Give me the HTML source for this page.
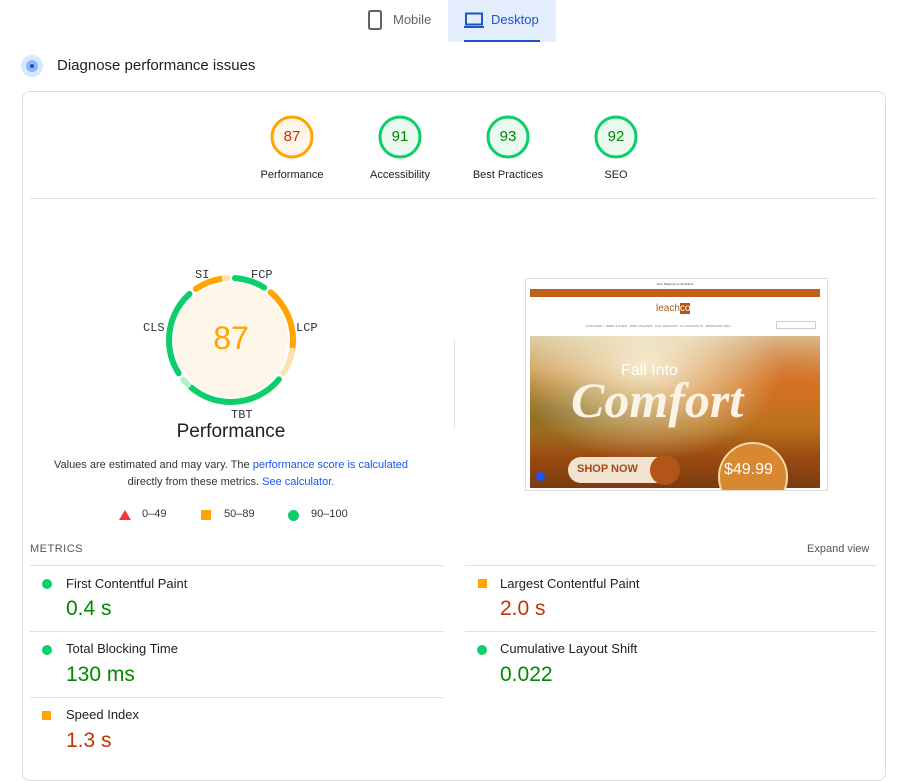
<!DOCTYPE html>
<html><head><meta charset="utf-8"><style>
*{margin:0;padding:0;box-sizing:border-box}
body{width:899px;height:766px;background:#fff;font-family:"Liberation Sans",Arial,sans-serif;color:#202124;position:relative;overflow:hidden}
.a{position:absolute}
.lbl{font-size:11px;color:#212121;text-align:center;width:110px}
.g{font-family:"Liberation Mono",monospace;font-size:12px;color:#333}
.mt{font-size:13px;color:#212121}
.mv{font-size:21px}
.line{position:absolute;height:1px;background:#e0e0e0}
</style></head><body>
<!-- tabs -->
<div class="a" style="left:448px;top:0;width:108px;height:42px;background:#e3edfb"></div>
<div class="a" style="left:464px;top:40px;width:76px;height:2px;background:#1a56c5"></div>
<svg class="a" style="left:367px;top:10px" width="16" height="20" viewBox="0 0 16 20"><rect x="2" y="1" width="12" height="18" rx="1.5" fill="none" stroke="#5f6368" stroke-width="2"/></svg>
<div class="a" style="left:393px;top:12px;font-size:13px;color:#5f6368">Mobile</div>
<svg class="a" style="left:464px;top:12px" width="20" height="17" viewBox="0 0 20 17"><rect x="2" y="1.5" width="16" height="11" fill="none" stroke="#1a56c5" stroke-width="2"/><rect x="0" y="14" width="20" height="2" fill="#1a56c5"/></svg>
<div class="a" style="left:491px;top:12px;font-size:13px;color:#1a56c5">Desktop</div>
<!-- diagnose -->
<div class="a" style="left:21px;top:55px;width:22px;height:22px;border-radius:50%;background:#d8e8fd"></div>
<div class="a" style="left:26px;top:60px;width:12px;height:12px;border-radius:50%;background:#8bb8f8"></div>
<div class="a" style="left:30px;top:64px;width:4px;height:4px;border-radius:50%;background:#1a56c5"></div>
<div class="a" style="left:57px;top:57px;font-size:15px;color:#202124">Diagnose performance issues</div>
<!-- card -->
<div class="a" style="left:22px;top:91px;width:864px;height:690px;border:1px solid #dadce0;border-radius:8px"></div>
<!-- small gauges -->
<svg class="a" style="left:268px;top:113px" width="48" height="48" viewBox="0 0 48 48"><circle cx="24" cy="24" r="20" fill="#fff6ea" stroke="#ffa400" stroke-width="3"/></svg>
<div class="a" style="left:268px;top:128px;width:48px;text-align:center;font-size:15px;color:#c33300">87</div>
<div class="a lbl" style="left:237px;top:169px">Performance</div>
<svg class="a" style="left:376px;top:113px" width="48" height="48" viewBox="0 0 48 48"><circle cx="24" cy="24" r="20" fill="#eafaf0" stroke="#0cce6b" stroke-width="3"/></svg>
<div class="a" style="left:376px;top:128px;width:48px;text-align:center;font-size:15px;color:#080">91</div>
<div class="a lbl" style="left:345px;top:169px">Accessibility</div>
<svg class="a" style="left:484px;top:113px" width="48" height="48" viewBox="0 0 48 48"><circle cx="24" cy="24" r="20" fill="#eafaf0" stroke="#0cce6b" stroke-width="3"/></svg>
<div class="a" style="left:484px;top:128px;width:48px;text-align:center;font-size:15px;color:#080">93</div>
<div class="a lbl" style="left:453px;top:169px">Best Practices</div>
<svg class="a" style="left:592px;top:113px" width="48" height="48" viewBox="0 0 48 48"><circle cx="24" cy="24" r="20" fill="#eafaf0" stroke="#0cce6b" stroke-width="3"/></svg>
<div class="a" style="left:592px;top:128px;width:48px;text-align:center;font-size:15px;color:#080">92</div>
<div class="a lbl" style="left:561px;top:169px">SEO</div>
<div class="line" style="left:30px;top:198px;width:847px"></div>
<!-- big gauge -->
<svg class="a" style="left:161px;top:270px" width="140" height="140" viewBox="161 270 140 140">
<circle cx="231" cy="340" r="57" fill="#fff6ea"/>
<g transform="rotate(-90 231 340)" fill="none" stroke-width="6" stroke-linecap="round">
<circle cx="231" cy="340" r="62" stroke="#0cce6b" stroke-dasharray="31 400" stroke-dashoffset="-4"/>
<circle cx="231" cy="340" r="62" stroke="#ffa400" stroke-dasharray="62 400" stroke-dashoffset="-43"/>
<circle cx="231" cy="340" r="62" stroke="#ffe0b3" stroke-dasharray="24 400" stroke-dashoffset="-108"/>
<circle cx="231" cy="340" r="62" stroke="#0cce6b" stroke-dasharray="98 400" stroke-dashoffset="-140"/>
<circle cx="231" cy="340" r="62" stroke="#b3f0d0" stroke-dasharray="7 400" stroke-dashoffset="-242"/>
<circle cx="231" cy="340" r="62" stroke="#0cce6b" stroke-dasharray="87 400" stroke-dashoffset="-257"/>
<circle cx="231" cy="340" r="62" stroke="#ffa400" stroke-dasharray="27 400" stroke-dashoffset="-352"/>
<circle cx="231" cy="340" r="62" stroke="#ffe0b3" stroke-dasharray="3 400" stroke-dashoffset="-383"/>
</g></svg>
<div class="a" style="left:181px;top:320px;width:100px;text-align:center;font-size:32px;color:#ffa400">87</div>
<div class="a g" style="left:195px;top:268px">SI</div>
<div class="a g" style="left:251px;top:268px">FCP</div>
<div class="a g" style="left:296px;top:321px">LCP</div>
<div class="a g" style="left:143px;top:321px">CLS</div>
<div class="a g" style="left:231px;top:408px">TBT</div>
<div class="a" style="left:131px;top:421px;width:200px;text-align:center;font-size:19px;color:#202124">Performance</div>
<div class="a" style="left:30px;top:457px;width:402px;text-align:center;font-size:11px;line-height:17px;color:#333">Values are estimated and may vary. The <span style="color:#1a56f5">performance score is calculated</span><br>directly from these metrics. <span style="color:#1a56f5">See calculator.</span></div>
<svg class="a" style="left:118px;top:509px" width="14" height="12"><polygon points="7,1 13,11 1,11" fill="#f33"/></svg>
<div class="a" style="left:142px;top:508px;font-size:11px;color:#333">0–49</div>
<div class="a" style="left:201px;top:510px;width:10px;height:10px;background:#ffa400"></div>
<div class="a" style="left:224px;top:508px;font-size:11px;color:#333">50–89</div>
<div class="a" style="left:288px;top:510px;width:11px;height:11px;border-radius:50%;background:#0cce6b"></div>
<div class="a" style="left:311px;top:508px;font-size:11px;color:#333">90–100</div>
<div class="a" style="left:454px;top:340px;width:1px;height:88px;background:#ddd"></div>
<!-- screenshot -->
<div class="a" style="left:525px;top:278px;width:303px;height:213px;border:1px solid #ddd;background:#fff;overflow:hidden">
 <div class="a" style="left:4px;top:3px;width:290px;text-align:center;font-size:3px;color:#333">Free Shipping on all Orders</div>
 <div class="a" style="left:4px;top:10px;width:290px;height:8px;background:#c0601a"></div>
 <div class="a" style="left:130px;top:24px;font-size:10px;color:#b05a1a">leach<span style="background:#b35418;color:#fff">co</span></div>
 <div class="a" style="left:60px;top:45px;font-size:3px;color:#777">OUR FAMILY · BABY &amp; CHILD · BODY PILLOWS · FALL SPECIALS · ALL PRODUCTS · IMPORTANT INFO</div>
 <div class="a" style="left:250px;top:42px;width:40px;height:8px;border:1px solid #ccc"></div>
 <div class="a" style="left:4px;top:57px;width:290px;height:152px;background:linear-gradient(180deg,#d9c9a0 0%,#c8872e 35%,#b4731e 60%,#9a4a10 80%,#7a3a10 100%)"></div>
 <div class="a" style="left:4px;top:57px;width:290px;height:152px;background:radial-gradient(ellipse at 40% 20%,rgba(255,250,230,.8),rgba(255,250,230,0) 55%),radial-gradient(ellipse at 90% 30%,rgba(220,90,20,.6),rgba(0,0,0,0) 40%),radial-gradient(ellipse at 10% 50%,rgba(90,100,40,.5),rgba(0,0,0,0) 40%)"></div>
 <div class="a" style="left:95px;top:83px;font-size:16px;color:#fff">Fall Into</div>
 <div class="a" style="left:45px;top:92px;font-size:50px;font-style:italic;font-weight:bold;font-family:'Liberation Serif',serif;color:#fbf3e6">Comfort</div>
 <div class="a" style="left:42px;top:178px;width:110px;height:26px;border-radius:13px;background:#f2e3d0"></div>
 <div class="a" style="left:51px;top:184px;font-size:11px;font-weight:bold;color:#a14a17">SHOP NOW</div>
 <div class="a" style="left:124px;top:176px;width:30px;height:30px;border-radius:50%;background:#b35418"></div>
 <div class="a" style="left:192px;top:163px;width:70px;height:70px;border-radius:50%;background:#d88830;border:2px solid #f5d9a8"></div>
 <div class="a" style="left:198px;top:182px;font-size:16px;color:#fff">$49.99</div>
 <div class="a" style="left:10px;top:193px;width:9px;height:9px;border-radius:50%;background:#1a56f5"></div>
</div>
<!-- metrics -->
<div class="a" style="left:30px;top:543px;font-size:11px;color:#555;letter-spacing:.5px">METRICS</div>
<div class="a" style="left:807px;top:543px;font-size:11px;color:#555">Expand view</div>
<div class="line" style="left:30px;top:565px;width:413px"></div>
<div class="line" style="left:465px;top:565px;width:412px"></div>
<div class="line" style="left:30px;top:631px;width:413px"></div>
<div class="line" style="left:465px;top:631px;width:412px"></div>
<div class="line" style="left:30px;top:697px;width:413px"></div>
<div class="a" style="left:42px;top:579px;width:10px;height:10px;border-radius:50%;background:#0cce6b"></div>
<div class="a mt" style="left:66px;top:576px">First Contentful Paint</div>
<div class="a mv" style="left:66px;top:597px;color:#080">0.4 s</div>
<div class="a" style="left:478px;top:579px;width:9px;height:9px;background:#ffa400"></div>
<div class="a mt" style="left:500px;top:576px">Largest Contentful Paint</div>
<div class="a mv" style="left:500px;top:597px;color:#c33300">2.0 s</div>
<div class="a" style="left:42px;top:645px;width:10px;height:10px;border-radius:50%;background:#0cce6b"></div>
<div class="a mt" style="left:66px;top:641px">Total Blocking Time</div>
<div class="a mv" style="left:66px;top:663px;color:#080">130 ms</div>
<div class="a" style="left:477px;top:645px;width:10px;height:10px;border-radius:50%;background:#0cce6b"></div>
<div class="a mt" style="left:500px;top:641px">Cumulative Layout Shift</div>
<div class="a mv" style="left:500px;top:663px;color:#080">0.022</div>
<div class="a" style="left:42px;top:711px;width:9px;height:9px;background:#ffa400"></div>
<div class="a mt" style="left:66px;top:707px">Speed Index</div>
<div class="a mv" style="left:66px;top:729px;color:#c33300">1.3 s</div>
</body></html>
